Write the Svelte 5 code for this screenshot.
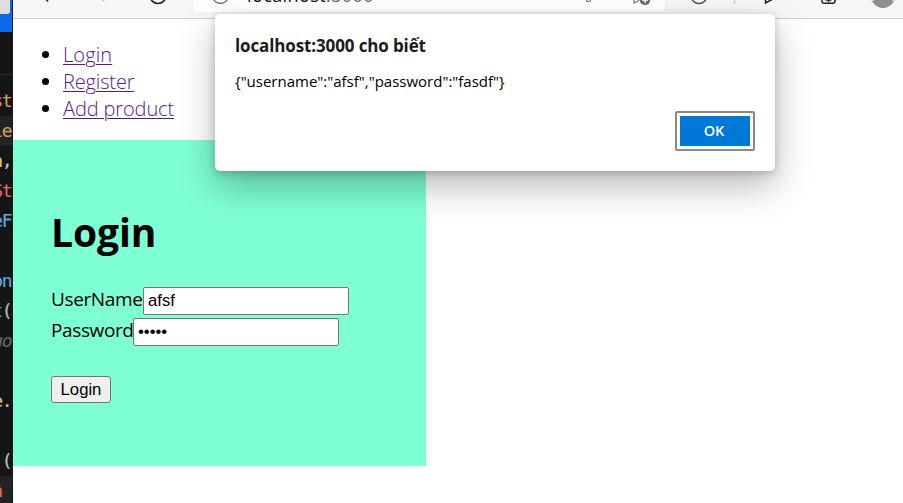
<script>
  const code = [
    { text: 'st', tone: 'orange' },
    { text: 'le', tone: 'orange', active: true },
    { text: 'n', tail: ',', tone: 'sand' },
    { text: 'St', tone: 'red' },
    { text: 'eF', tone: 'blue' },
    { text: '', tone: 'blue' },
    { text: 'on', tone: 'blue' },
    { text: 't', tail: '(', tone: 'blue' },
    { text: 'uo', tone: 'comment' },
    { text: '', tone: 'blue' },
    { text: 'e', tail: '.', tone: 'sand' },
    { text: '', tone: 'blue' },
    { text: '', tail: '(', tone: 'blue' },
    { text: 'n ', tone: 'red', active: true }
  ];
  const links = [
    { label: 'Login', spacing: 0.1 },
    { label: 'Register', spacing: -0.15 },
    { label: 'Add product', spacing: -0.12 }
  ];
  let username = $state('afsf');
  let password = $state('fasdf');
</script>

<div class="screen">
  <aside class="editor">
    <div class="titlebar"><span></span></div>
    <div class="tabs"></div>
    {#each code as line}
      <div class="line {line.tone}" class:active={line.active}>{line.text}<i>{line.tail ?? ''}</i></div>
    {/each}
  </aside>

  <div class="browser">
    <header class="toolbar">
      <svg class="nav" width="180" height="18" viewBox="13 0 180 18" fill="none" stroke="#222" stroke-width="1.6">
        <path d="M42.500 -5L48 1.500" />
        <path d="M107 -4L102.500 1.500" stroke="#c4c4c4" />
        <circle cx="158" cy="-4.500" r="8" />
      </svg>
      <div class="address">
        <svg width="37" height="12" viewBox="193 0 37 12" fill="none" stroke="#707070" stroke-width="1.300"><circle cx="220.500" cy="-4.500" r="8" /></svg>
        <span class="url"><b>localhost</b>:3000</span>
        <svg class="fav" width="80" height="12" viewBox="570 0 80 12" fill="none" stroke="#777" stroke-width="1.200">
          <circle cx="588.500" cy="-.5" r="2.200" />
          <path d="M634 -3V3L639 .5" />
          <circle cx="645" cy="-.5" r="5.500" fill="#6b6b6b" stroke="none" />
          <path d="M642 0H648M645 -3V3" stroke="#fff" stroke-width="1.400" />
        </svg>
      </div>
      <svg class="tools" width="238" height="18" viewBox="665 0 238 18" fill="none" stroke="#222" stroke-width="1.500">
        <circle cx="699" cy="-4.500" r="8" stroke="#555" />
        <path d="M734.500 0V4" stroke="#ccc" />
        <path d="M765.500 -4V3L773 -1" />
        <path d="M822 -2V1Q822 3.300 824.300 3.300H832.700Q835 3.300 835 1V-2M828.500 -2V2M825.500 0H831.500" />
        <circle cx="883" cy="-5" r="13" fill="#d7d5d3" stroke="none" />
        <path d="M872.500 2C875 -3 891 -3 893.500 2Q883 14 872.500 2Z" fill="#8f8c8a" stroke="none" />
      </svg>
    </header>

    <main>
      <ul>
        {#each links as link}
          <li><a href="#top" style:letter-spacing="{link.spacing}px">{link.label}</a></li>
        {/each}
      </ul>
      <section class="login">
        <h1>Login</h1>
        <form onsubmit={(e) => e.preventDefault()}>
          <div class="field"><label class="user" for="user">UserName</label><input id="user" bind:value={username} /></div>
          <div class="field"><label class="pass" for="pass">Password</label><input id="pass" type="password" bind:value={password} /></div>
          <button class="submit">Login</button>
        </form>
      </section>
    </main>
  </div>

  <div class="dialog" role="alertdialog" aria-labelledby="dialog-title">
    <h2 id="dialog-title">localhost:3000 cho biết</h2>
    <p>{'{"username":"afsf","password":"fasdf"}'}</p>
    <button class="ok">OK</button>
  </div>
</div>

<style>
  :global(body) { margin: 0; overflow: hidden; }
  .screen { position: relative; display: flex; width: 903px; height: 503px; overflow: hidden; background: #fff; color: #000; font-family: "Open Sans", "Noto Sans", sans-serif; }
  .editor { flex: none; width: 13px; height: 503px; overflow: hidden; background: #151515; box-sizing: border-box; border-right: 1px solid #101820; }
  .titlebar { height: 32px; background: #0969e8; }
  .titlebar span { display: block; width: 10px; height: 14px; background: #dedede; border-radius: 0 0 3px 0; }
  .tabs { height: 54px; box-sizing: border-box; background: linear-gradient(#151515 42px, #2b2b2b 42px, #2b2b2b 43px, #151515 43px); }
  .line { display: flex; justify-content: flex-end; height: 30px; font: 18px/30px "DejaVu Sans Mono", monospace; letter-spacing: -1.500px; white-space: pre; padding-right: 1px; -webkit-text-stroke: .2px; }
  .line i { font-style: normal; color: #b9bec6; }
  .active { background: #232323; }
  .orange { color: #c99a6a; }
  .sand { color: #dfc184; }
  .red { color: #df6570; }
  .blue { color: #5da5df; }
  .comment { color: #666; font-style: italic; }

  .browser { flex: 1; min-width: 0; }
  .toolbar { display: flex; height: 19px; box-sizing: border-box; background: #f6f6f6; border-bottom: 1px solid #cfcfcf; }
  .toolbar svg { flex: none; display: block; }
  .address { display: flex; width: 472px; height: 12px; background: #fff; border-radius: 0 0 4px 4px; overflow: hidden; box-shadow: 0 0 2px #e4e4e4; }
  .url { margin: -17px 0 0 17px; font-size: 18px; line-height: 24px; color: #666; letter-spacing: .4px; }
  .url b { font-weight: 400; color: #111; }
  .fav { margin-left: auto; margin-right: 15px; }

  ul { margin: 0; padding: 22px 0 18px 50px; font-size: 20px; line-height: 27px; }
  li { height: 27px; }
  a { color: #551a8b; font-weight: 300; text-decoration-thickness: 1px; text-underline-offset: 2px; }
  .login { box-sizing: border-box; width: 413px; height: 326px; padding: 65px 38px 0; background: #7fffd4; }
  h1 { margin: 0 0 28px; font-size: 39px; line-height: 54px; letter-spacing: -.1px; }
  .field { display: flex; height: 28px; margin-bottom: 3px; font-size: 19px; line-height: 25px; }
  label { flex: none; white-space: nowrap; letter-spacing: -.38px; }
  .user { width: 92px; }
  .pass { width: 82px; }
  input { box-sizing: border-box; width: 206px; height: 28px; margin: 0; padding: 0 4px; border: 1px solid #767676; border-radius: 2px; background: #fff; color: #000; font: 16.667px "Liberation Sans", Arial, sans-serif; outline: 0; }
  .submit { display: block; width: 60px; height: 27px; margin-top: 30px; padding: 0; border: 1px solid #767676; border-radius: 3px; background: #efefef; color: #000; font: 16.667px "Liberation Sans", Arial, sans-serif; }

  .dialog { position: absolute; left: 215px; top: 14px; display: flex; flex-direction: column; box-sizing: border-box; width: 560px; height: 157px; padding: 20px; border-radius: 5px; background: #fff; color: #1b1b1b; box-shadow: 0 16px 36px rgba(0, 0, 0, .27), 0 2px 9px rgba(0, 0, 0, .2); }
  h2 { margin: 0; font-size: 17px; line-height: 24px; font-weight: 700; letter-spacing: -.13px; white-space: nowrap; }
  p { margin: 12px 0 1px; font-size: 15px; line-height: 22px; white-space: nowrap; color: #000; }
  .ok { align-self: flex-end; box-sizing: border-box; width: 80px; height: 40px; margin-top: 18px; padding: 0 2px 2px 0; border: 2px solid #858a90; border-radius: 2px; background: #0078d7; box-shadow: inset 0 0 0 3px #fff; color: #fff; font: 600 14.500px "Open Sans", sans-serif; }
</style>
